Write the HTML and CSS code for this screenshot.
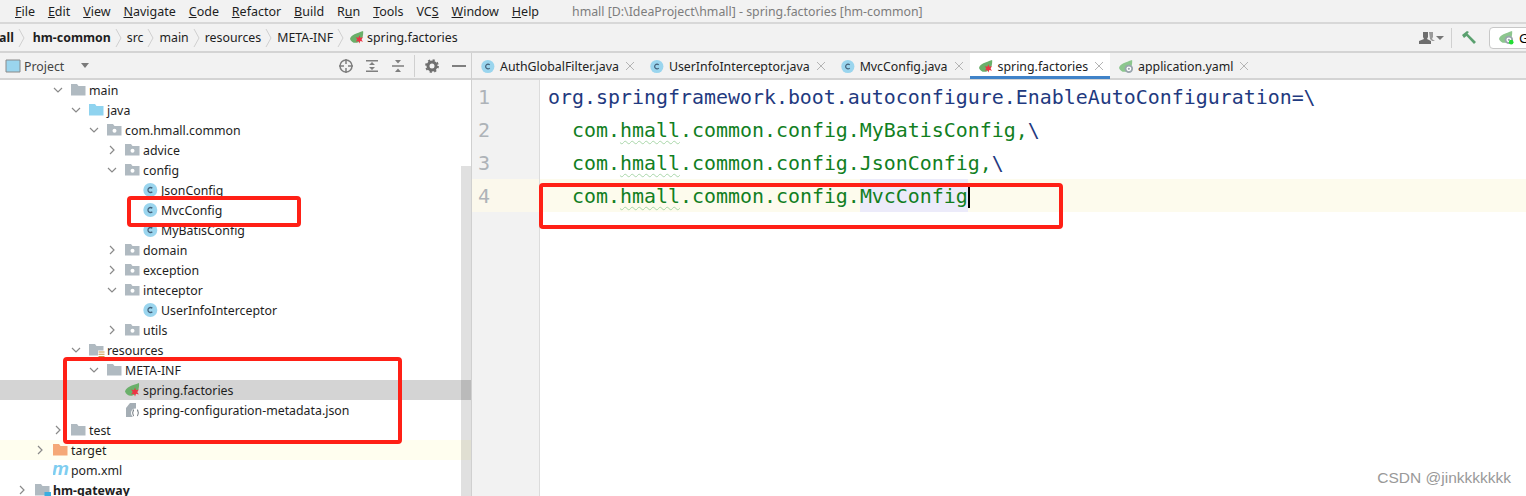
FILE: index.html
```html
<!DOCTYPE html>
<html lang="en">
<head>
<meta charset="utf-8">
<title>hmall - spring.factories</title>
<link rel="stylesheet" href="styles.css">
</head>
<body>
<svg class="defs" width="0" height="0">
  <defs>
    <symbol id="i-class" viewBox="0 0 16 16"><circle cx="7.300" cy="8" r="7" fill="#9ad5ee"/><path d="M9.300 6.300A2.500 2.500 0 1 0 9.300 9.700" fill="none" stroke="#44617a" stroke-width="1.300"/></symbol>
    <symbol id="i-pkg" viewBox="0 0 16 16"><path d="M0 2h6l1.500 2h7v9.500H0z" fill="#b0bac1"/><circle cx="7.500" cy="8.700" r="2" fill="#fff"/></symbol>
    <symbol id="i-folder" viewBox="0 0 16 16"><path d="M0 2h6l1.500 2h7v9.500H0z" fill="#b0bac1"/></symbol>
    <symbol id="i-src" viewBox="0 0 16 16"><path d="M0 2h6l1.500 2h7v9.500H0z" fill="#8fd3ef"/></symbol>
    <symbol id="i-res" viewBox="0 0 16 16"><path d="M0 2h6l1.500 2h7v9.500H0z" fill="#b0bac1"/><path d="M9 8.500h7V15H9z" fill="#fff"/><path d="M9.500 9.500h6v1.100h-6zM9.500 11.700h6v1.100h-6zM9.500 13.900h6V15h-6z" fill="#c9984a"/></symbol>
    <symbol id="i-target" viewBox="0 0 16 16"><path d="M0 2h6l1.500 2h7v9.500H0z" fill="#f5a877"/></symbol>
    <symbol id="i-module" viewBox="0 0 16 16"><path d="M0 2h6l1.500 2h7v9.500H0z" fill="#b0bac1"/><path d="M9.500 10h6.500v6H9.500z" fill="#3baee0"/></symbol>
    <symbol id="i-spring" viewBox="0 0 16 16"><path d="M0 9.500C1 5 7 3.500 14 1c.5 5-1 11-6.500 12.500C4 14.300 1 12.500 0 9.500z" fill="#6ab06a"/><path d="M10 5.500l1 2.700 2.900-.6-1.700 2.400 1.700 2.400-2.900-.6-1 2.700-1-2.700-2.900.6 1.700-2.400L6.100 7.600l2.900.6z" fill="#ee3344"/></symbol>
    <symbol id="i-yaml" viewBox="0 0 16 16"><path d="M0 9.500C1 5 7 3.500 14 1c.5 5-1 11-6.500 12.500C4 14.300 1 12.500 0 9.500z" fill="#8cc68e"/><circle cx="10.500" cy="10.500" r="4.500" fill="#9aa5ad"/><circle cx="10.500" cy="10.500" r="2.600" fill="#fff"/><circle cx="10.500" cy="10.500" r="1.200" fill="#9aa5ad"/></symbol>
    <symbol id="i-json" viewBox="0 0 16 16"><path d="M1 6l4-5h6v6H1z" fill="#a5aeb5"/><path d="M1 7h10v8H1z" fill="#a5aeb5"/><circle cx="10.500" cy="11" r="4.500" fill="#fff"/><path d="M9 7.500c-1.200 0-.6 3-1.600 3.500 1 .5.400 3 1.600 3M12 7.500c1.200 0 .6 3 1.600 3.500-1 .5-.4 3-1.600 3" fill="none" stroke="#5f686f"/></symbol>
    <symbol id="i-maven" viewBox="0 0 16 16"><text x="-1" y="13" class="maven-m">m</text></symbol>
    <symbol id="i-open" viewBox="0 0 12 12"><path d="M2 4l4 4 4-4" fill="none" stroke="#8a8a8a" stroke-width="1.200"/></symbol>
    <symbol id="i-closed" viewBox="0 0 12 12"><path d="M4 2l4 4-4 4" fill="none" stroke="#8a8a8a" stroke-width="1.200"/></symbol>
    <symbol id="i-x" viewBox="0 0 10 10"><path d="M1 1l8 8M9 1l-8 8" stroke="#b4b4b4" stroke-width="1"/></symbol>
    <symbol id="i-sep" viewBox="0 0 8 20"><path d="M1 1l5 9-5 9" fill="none" stroke="#d0d0d0"/></symbol>
  </defs>
</svg>

<header class="menubar">
  <nav class="menus">
    <span><u>F</u>ile</span><span><u>E</u>dit</span><span><u>V</u>iew</span><span><u>N</u>avigate</span><span><u>C</u>ode</span><span><u>R</u>efactor</span><span><u>B</u>uild</span><span>R<u>u</u>n</span><span><u>T</u>ools</span><span>VC<u>S</u></span><span><u>W</u>indow</span><span><u>H</u>elp</span>
  </nav>
  <span class="wintitle">hmall [D:\IdeaProject\hmall] - spring.factories [hm-common]</span>
</header>

<div class="navbar">
  <b class="crumb-cut">hmall</b>
  <svg class="sep"><use href="#i-sep"/></svg>
  <b class="crumb-module">hm-common</b>
  <svg class="sep"><use href="#i-sep"/></svg>
  <span>src</span>
  <svg class="sep"><use href="#i-sep"/></svg>
  <span>main</span>
  <svg class="sep"><use href="#i-sep"/></svg>
  <span>resources</span>
  <svg class="sep"><use href="#i-sep"/></svg>
  <span>META-INF</span>
  <svg class="sep"><use href="#i-sep"/></svg>
  <svg class="ico"><use href="#i-spring"/></svg>
  <span class="crumb-file">spring.factories</span>
  <div class="nav-tools">
    <svg class="users" viewBox="0 0 26 14" width="26" height="14"><path d="M5 1h5v5l-1 2 4 2v3H1v-3l5-2-1-2z" fill="#6e6e6e"/><path d="M11 1h4v5l-1 2 3 2h-3l-2-2z" fill="#9a9a9a"/><path d="M18 5h8l-4 4z" fill="#777"/></svg>
    <i class="vline"></i>
    <svg class="hammer" viewBox="0 0 16 16" width="16" height="16"><path d="M1 5l5-4 2 1-1.500 1.500L15 12l-2 2-7.500-8L3 8z" fill="#5aa06f"/></svg>
    <div class="runcfg"><svg class="ico" viewBox="0 0 16 16"><use href="#i-yaml"/><circle cx="13" cy="13" r="2.500" fill="#22dd33"/></svg><span>G</span></div>
  </div>
</div>

<div class="main">
  <aside class="project">
    <div class="panelhead">
      <svg class="proj-ico" viewBox="0 0 16 16" width="16" height="16"><path d="M1 2h14v12H1z" fill="#9ad5ee" stroke="#8a8a8a"/></svg>
      <span class="proj-label">Project</span>
      <svg class="caret" viewBox="0 0 10 6" width="10" height="6"><path d="M1 0h8L5 5z" fill="#7a7a7a"/></svg>
      <div class="panel-tools">
        <svg class="tool-target" viewBox="0 0 16 16" width="16" height="16"><circle cx="8" cy="8" r="6" fill="none" stroke="#7f7f7f" stroke-width="1.500"/><path d="M8 1v5M8 10v5M1 8h5M10 8h5" stroke="#7f7f7f" stroke-width="1.500"/></svg>
        <svg viewBox="0 0 14 14" width="14" height="14"><path d="M1 1h12v1.500H1zM1 11.500h12V13H1zM4 6l3-3 3 3zM4 8l3 3 3-3z" fill="#7f7f7f"/></svg>
        <svg viewBox="0 0 14 14" width="14" height="14"><path d="M1 6.200h12v1.500H1zM4 1l3 3.500L10 1zM4 13l3-3.500 3 3.500z" fill="#7f7f7f"/></svg>
        <i class="vline short"></i>
        <svg viewBox="0 0 14 14" width="14" height="14"><circle cx="7" cy="7" r="4" fill="none" stroke="#6f6f6f" stroke-width="3"/><circle cx="7" cy="7" r="6" fill="none" stroke="#6f6f6f" stroke-width="1.800" stroke-dasharray="2.200 2.500"/></svg>
        <svg class="tool-min" viewBox="0 0 14 2" width="14" height="2"><path d="M0 0h14v2H0z" fill="#7f7f7f"/></svg>
      </div>
    </div>
    <div class="tree">
      <div class="row d2"><svg class="chev"><use href="#i-open"/></svg><svg class="ico"><use href="#i-folder"/></svg><span>main</span></div>
      <div class="row d3"><svg class="chev"><use href="#i-open"/></svg><svg class="ico"><use href="#i-src"/></svg><span>java</span></div>
      <div class="row d4"><svg class="chev"><use href="#i-open"/></svg><svg class="ico"><use href="#i-pkg"/></svg><span>com.hmall.common</span></div>
      <div class="row d5"><svg class="chev"><use href="#i-closed"/></svg><svg class="ico"><use href="#i-pkg"/></svg><span>advice</span></div>
      <div class="row d5"><svg class="chev"><use href="#i-open"/></svg><svg class="ico"><use href="#i-pkg"/></svg><span>config</span></div>
      <div class="row d6"><i class="chev"></i><svg class="ico"><use href="#i-class"/></svg><span>JsonConfig</span></div>
      <div class="row d6"><i class="chev"></i><svg class="ico"><use href="#i-class"/></svg><span>MvcConfig</span></div>
      <div class="row d6"><i class="chev"></i><svg class="ico"><use href="#i-class"/></svg><span>MyBatisConfig</span></div>
      <div class="row d5"><svg class="chev"><use href="#i-closed"/></svg><svg class="ico"><use href="#i-pkg"/></svg><span>domain</span></div>
      <div class="row d5"><svg class="chev"><use href="#i-closed"/></svg><svg class="ico"><use href="#i-pkg"/></svg><span>exception</span></div>
      <div class="row d5"><svg class="chev"><use href="#i-open"/></svg><svg class="ico"><use href="#i-pkg"/></svg><span>inteceptor</span></div>
      <div class="row d6"><i class="chev"></i><svg class="ico"><use href="#i-class"/></svg><span>UserInfoInterceptor</span></div>
      <div class="row d5"><svg class="chev"><use href="#i-closed"/></svg><svg class="ico"><use href="#i-pkg"/></svg><span>utils</span></div>
      <div class="row d3"><svg class="chev"><use href="#i-open"/></svg><svg class="ico"><use href="#i-res"/></svg><span>resources</span></div>
      <div class="row d4"><svg class="chev"><use href="#i-open"/></svg><svg class="ico"><use href="#i-folder"/></svg><span>META-INF</span></div>
      <div class="row d5 selected"><i class="chev"></i><svg class="ico"><use href="#i-spring"/></svg><span>spring.factories</span></div>
      <div class="row d5"><i class="chev"></i><svg class="ico"><use href="#i-json"/></svg><span>spring-configuration-metadata.json</span></div>
      <div class="row d2"><svg class="chev"><use href="#i-closed"/></svg><svg class="ico"><use href="#i-folder"/></svg><span>test</span></div>
      <div class="row d1 ignored"><svg class="chev"><use href="#i-closed"/></svg><svg class="ico"><use href="#i-target"/></svg><span>target</span></div>
      <div class="row d1"><i class="chev"></i><svg class="ico"><use href="#i-maven"/></svg><span>pom.xml</span></div>
      <div class="row d0"><svg class="chev"><use href="#i-closed"/></svg><svg class="ico"><use href="#i-module"/></svg><b>hm-gateway</b></div>
      <div class="scrollbar"></div>
    </div>
    <div class="mark mark-mvc"></div>
    <div class="mark mark-meta"></div>
  </aside>

  <section class="editor">
    <div class="tabs">
      <div class="tab"><svg class="ico"><use href="#i-class"/></svg><span>AuthGlobalFilter.java</span><svg class="close"><use href="#i-x"/></svg></div>
      <div class="tab"><svg class="ico"><use href="#i-class"/></svg><span>UserInfoInterceptor.java</span><svg class="close"><use href="#i-x"/></svg></div>
      <div class="tab"><svg class="ico"><use href="#i-class"/></svg><span>MvcConfig.java</span><svg class="close"><use href="#i-x"/></svg></div>
      <div class="tab active"><svg class="ico"><use href="#i-spring"/></svg><span>spring.factories</span><svg class="close"><use href="#i-x"/></svg></div>
      <div class="tab"><svg class="ico"><use href="#i-yaml"/></svg><span>application.yaml</span><svg class="close"><use href="#i-x"/></svg></div>
    </div>
    <div class="code">
      <div class="line"><span class="num">1</span><span class="src key">org.springframework.boot.autoconfigure.EnableAutoConfiguration=\</span></div>
      <div class="line"><span class="num">2</span><span class="src val">  com.<span class="typo">hmall</span>.common.config.MyBatisConfig,<span class="key">\</span></span></div>
      <div class="line"><span class="num">3</span><span class="src val">  com.<span class="typo">hmall</span>.common.config.JsonConfig,<span class="key">\</span></span></div>
      <div class="line current"><span class="num">4</span><span class="src val">  com.<span class="typo">hmall</span>.common.config.<span class="match">MvcConfig</span><i class="caret-bar"></i></span></div>
      <div class="rest"></div>
    </div>
    <div class="mark mark-code"></div>
    <div class="watermark">CSDN @jinkkkkkkk</div>
  </section>
</div>
</body>
</html>
```

FILE: styles.css
```css
* { box-sizing: border-box; }
html, body { margin: 0; height: 100%; }
body {
  width: 1526px;
  height: 496px;
  overflow: hidden;
  background: #f2f2f2;
  font: 12.35px "Noto Sans", "Open Sans", sans-serif;
  color: #1e1e1e;
}
.defs { position: absolute; }
.maven-m { font: italic 700 19px "Liberation Sans", sans-serif; fill: #7fcdf0; }

.menubar {
  height: 24px;
  display: flex;
  align-items: center;
  padding-left: 15px;
  border-bottom: 2px solid #d8d8d8;
  white-space: nowrap;
}
.menus { display: flex; gap: 12.9px; width: 557px; font-size: 12.5px; }
.wintitle { color: #7d7d7d; }

.navbar {
  height: 29px;
  display: flex;
  align-items: center;
  border-bottom: 2px solid #d4d4d4;
  white-space: nowrap;
  overflow: hidden;
}
.crumb-cut { margin-left: -21px; }
.crumb-module { margin-left: 3px; }
.sep { width: 8px; height: 20px; margin: 0 4px; flex: none; }
.crumb-file { margin-left: 2px; }
.navbar .ico { width: 15px; height: 15px; flex: none; margin-left: 1px; }
.nav-tools {
  margin-left: auto;
  display: flex;
  align-items: center;
  margin-right: -40px;
}
.users { margin-right: 7px; }
.vline { width: 1px; height: 20px; background: #d0d0d0; display: block; }
.vline.short { height: 22px; margin: 0 -2px 0 -3px; }
.hammer { margin: 0 12px 0 9px; }
.runcfg {
  width: 77px;
  height: 22px;
  border: 1px solid #c8c8c8;
  border-radius: 4px;
  background: #fff;
  display: flex;
  align-items: center;
  gap: 5px;
  padding-left: 9px;
  color: #000;
  font-size: 13px;
}
.runcfg .ico { margin-left: 0; }

.main {
  height: 443px;
  display: flex;
}
.project {
  width: 472px;
  flex: none;
  position: relative;
  border-right: 1px solid #d0d0d0;
}
.panelhead {
  height: 27px;
  display: flex;
  align-items: center;
  padding: 1px 0 0 5px;
  border-bottom: 2px solid #d4d4d4;
}
.proj-label { margin-left: 3px; color: #444; }
.caret { margin-left: 16px; }
.panel-tools {
  margin-left: auto;
  display: flex;
  align-items: center;
  gap: 12px;
  padding-right: 5px;
}
.tool-target { margin-right: -1px; }
.tool-min { margin-left: 1px; }
.tree {
  position: relative;
  background: #fff;
  height: 416px;
  overflow: hidden;
}
.row {
  height: 20px;
  display: flex;
  align-items: center;
  white-space: nowrap;
}
.row .ico { width: 16px; height: 16px; flex: none; margin-right: 2px; }
.chev { width: 12px; height: 12px; margin-right: 7px; flex: none; display: block; }
.d0 { padding-left: 16px; }
.d1 { padding-left: 34px; }
.d2 { padding-left: 52px; }
.d3 { padding-left: 70px; }
.d4 { padding-left: 88px; }
.d5 { padding-left: 106px; }
.d6 { padding-left: 124px; }
.selected { background: #d4d4d4; }
.ignored { background: #fffeef; }
.scrollbar {
  position: absolute;
  top: 86px;
  right: 0;
  bottom: 0;
  width: 10px;
  background: rgba(0, 0, 0, .12);
}

.editor {
  flex: 1;
  min-width: 0;
  position: relative;
  display: flex;
  flex-direction: column;
}
.tabs {
  height: 27px;
  display: flex;
  border-bottom: 2px solid #d4d4d4;
  flex: none;
  white-space: nowrap;
}
.tab {
  display: flex;
  align-items: center;
  padding: 0 6px 0 9px;
  height: 26px;
  color: #222;
}
.tab .ico { width: 15px; height: 15px; margin-right: 4px; flex: none; }
.close { width: 10px; height: 10px; margin-left: 6px; flex: none; }
.tab.active { background: #fff; box-shadow: inset 0 -3px 0 #4083c9; }

.code { flex: 1; background: #fff; display: flex; flex-direction: column; }
.line {
  height: 33px;
  display: flex;
  align-items: flex-start;
  flex: none;
}
.num {
  width: 68px;
  flex: none;
  height: 100%;
  background: #f2f2f2;
  border-right: 1px solid #dcdcdc;
  color: #aeb3b8;
  padding-left: 6px;
  display: flex;
  align-items: center;
  font: 20px "DejaVu Sans Mono", monospace;
}
.src {
  padding-left: 8px;
  white-space: pre;
  height: 33px;
  font: 19.93px/35px "DejaVu Sans Mono", monospace;
}
.key { color: #1f3a80; }
.val { color: #127f1f; }
.typo {
  text-decoration: underline wavy #a9d6a9 1px;
  text-underline-offset: 3px;
}
.current { background: #fdfbed; }
.current .num { background: #fbf8ec; }
.match { background: #ecebfa; display: inline-block; height: 33px; }
.caret-bar {
  display: inline-block;
  width: 2px;
  height: 23px;
  background: #000;
  vertical-align: -5px;
}
.rest {
  flex: 1;
  width: 68px;
  background: #f2f2f2;
  border-right: 1px solid #dcdcdc;
}

.mark {
  position: absolute;
  border: 4px solid #ff2016;
  border-radius: 4px;
}
.mark-mvc { left: 127px; top: 143px; width: 174px; height: 31px; }
.mark-meta { left: 63px; top: 304px; width: 339px; height: 87px; }
.mark-code { left: 67px; top: 130px; width: 524px; height: 46px; }
.watermark {
  position: absolute;
  right: 15px;
  bottom: 9px;
  font: 15.5px "Liberation Sans", sans-serif;
  color: #999;
}
```
